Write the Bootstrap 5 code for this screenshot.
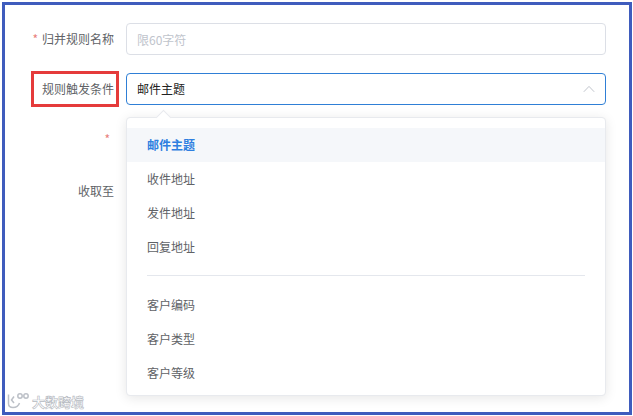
<!DOCTYPE html>
<html lang="zh">
<head>
<meta charset="utf-8">
<title>归并规则</title>
<link href="https://cdn.jsdelivr.net/npm/bootstrap@5.3.0/dist/css/bootstrap.min.css" rel="stylesheet">
<style>
html,body{height:100%;background:#fff;overflow:hidden}
body{padding:2px 1px 1px 2px;font-family:"Noto Sans CJK SC","Liberation Sans",sans-serif;font-size:12px;color:#606266}
.shot-frame{position:relative;height:100%;border:3px solid #3f5cbd;padding:18px 23px 0 0}
.field-row{height:32px;margin-bottom:18px}
.field-row.low{margin-top:20px}
.field-label{width:109px;text-align:right;color:#606266;font-size:12px;line-height:32px}
.req{color:#e8807c;margin-right:4px;font-size:12px}
.field-box{width:480px;margin-left:12px;position:relative}
.field-box .form-control{height:32px;width:480px;padding:0 10px;font-size:12px;border-color:#dcdfe6;border-radius:4px;line-height:30px;color:#303133}
.field-box .form-control::placeholder{color:#c0c4cc}
.form-control.picked{border-color:#2f7fd6;color:#222}
.chev{width:12px;height:8px}
.opt-menu{display:block;left:0;top:44px;width:480px;height:279px;padding:10px 0 0;margin:0;border:1px solid #e8eaee;border-radius:4px;box-shadow:0 2px 12px rgba(0,0,0,.1);z-index:5}
.opt-arrow{position:absolute;left:31px;top:-6px;width:11px;height:11px;background:#fff;border-left:1px solid #e8eaee;border-top:1px solid #e8eaee;transform:rotate(45deg)}
.opt-menu .dropdown-item{height:34px;line-height:34px;padding:0 20px;font-size:12px;color:#606266}
.opt-menu .dropdown-item.cur{background:#f5f7fa;color:#2f7fe0;font-weight:700}
.opt-menu .dropdown-divider{margin:11px 20px 12px;border-color:#e4e7ed;opacity:1}
.mark-box{position:absolute;left:26px;top:66px;width:88px;height:36px;border:3px solid #e53b3b}
.wm{position:absolute;left:2px;bottom:0;display:flex;align-items:center;gap:2px;height:22px;z-index:6}
.wm-text{font-size:13px;font-weight:700;color:#fff;-webkit-text-stroke:.6px #b4b8c0;line-height:1}
</style>
</head>
<body>
<div class="shot-frame">
  <div class="field-row d-flex">
    <div class="field-label"><span class="req">*</span>归并规则名称</div>
    <div class="field-box"><input class="form-control" placeholder="限60字符"></div>
  </div>
  <div class="field-row d-flex">
    <div class="field-label">规则触发条件</div>
    <div class="field-box">
      <div class="form-control picked d-flex align-items-center justify-content-between">
        <span>邮件主题</span>
        <svg class="chev" viewBox="0 0 12 8" fill="none" stroke="#c0c4cc" stroke-width="1"><path d="M.8 6.800 6 1.400l5.200 5.400"/></svg>
      </div>
      <div class="dropdown-menu opt-menu">
        <span class="opt-arrow"></span>
        <a class="dropdown-item cur" href="#">邮件主题</a>
        <a class="dropdown-item" href="#">收件地址</a>
        <a class="dropdown-item" href="#">发件地址</a>
        <a class="dropdown-item" href="#">回复地址</a>
        <hr class="dropdown-divider">
        <a class="dropdown-item" href="#">客户编码</a>
        <a class="dropdown-item" href="#">客户类型</a>
        <a class="dropdown-item" href="#">客户等级</a>
      </div>
    </div>
  </div>
  <div class="field-row d-flex">
    <div class="field-label"><span class="req">*</span></div>
  </div>
  <div class="field-row low d-flex">
    <div class="field-label">收取至</div>
  </div>
  <div class="mark-box"></div>
  <div class="wm">
    <svg width="23" height="16" viewBox="0 0 23 16" fill="none" stroke="#bcc0c7" stroke-width="1.500"><path d="M1.500 1.500v9c0 2.800 2 4 4.500 4s5.500-1.500 6.500-4.500"/><path d="M7 3.500 4.500 7 7 10"/><circle cx="13" cy="3" r="2.200"/><circle cx="19" cy="3" r="2.200"/></svg>
    <span class="wm-text">大数跨境</span>
  </div>
</div>
</body>
</html>
